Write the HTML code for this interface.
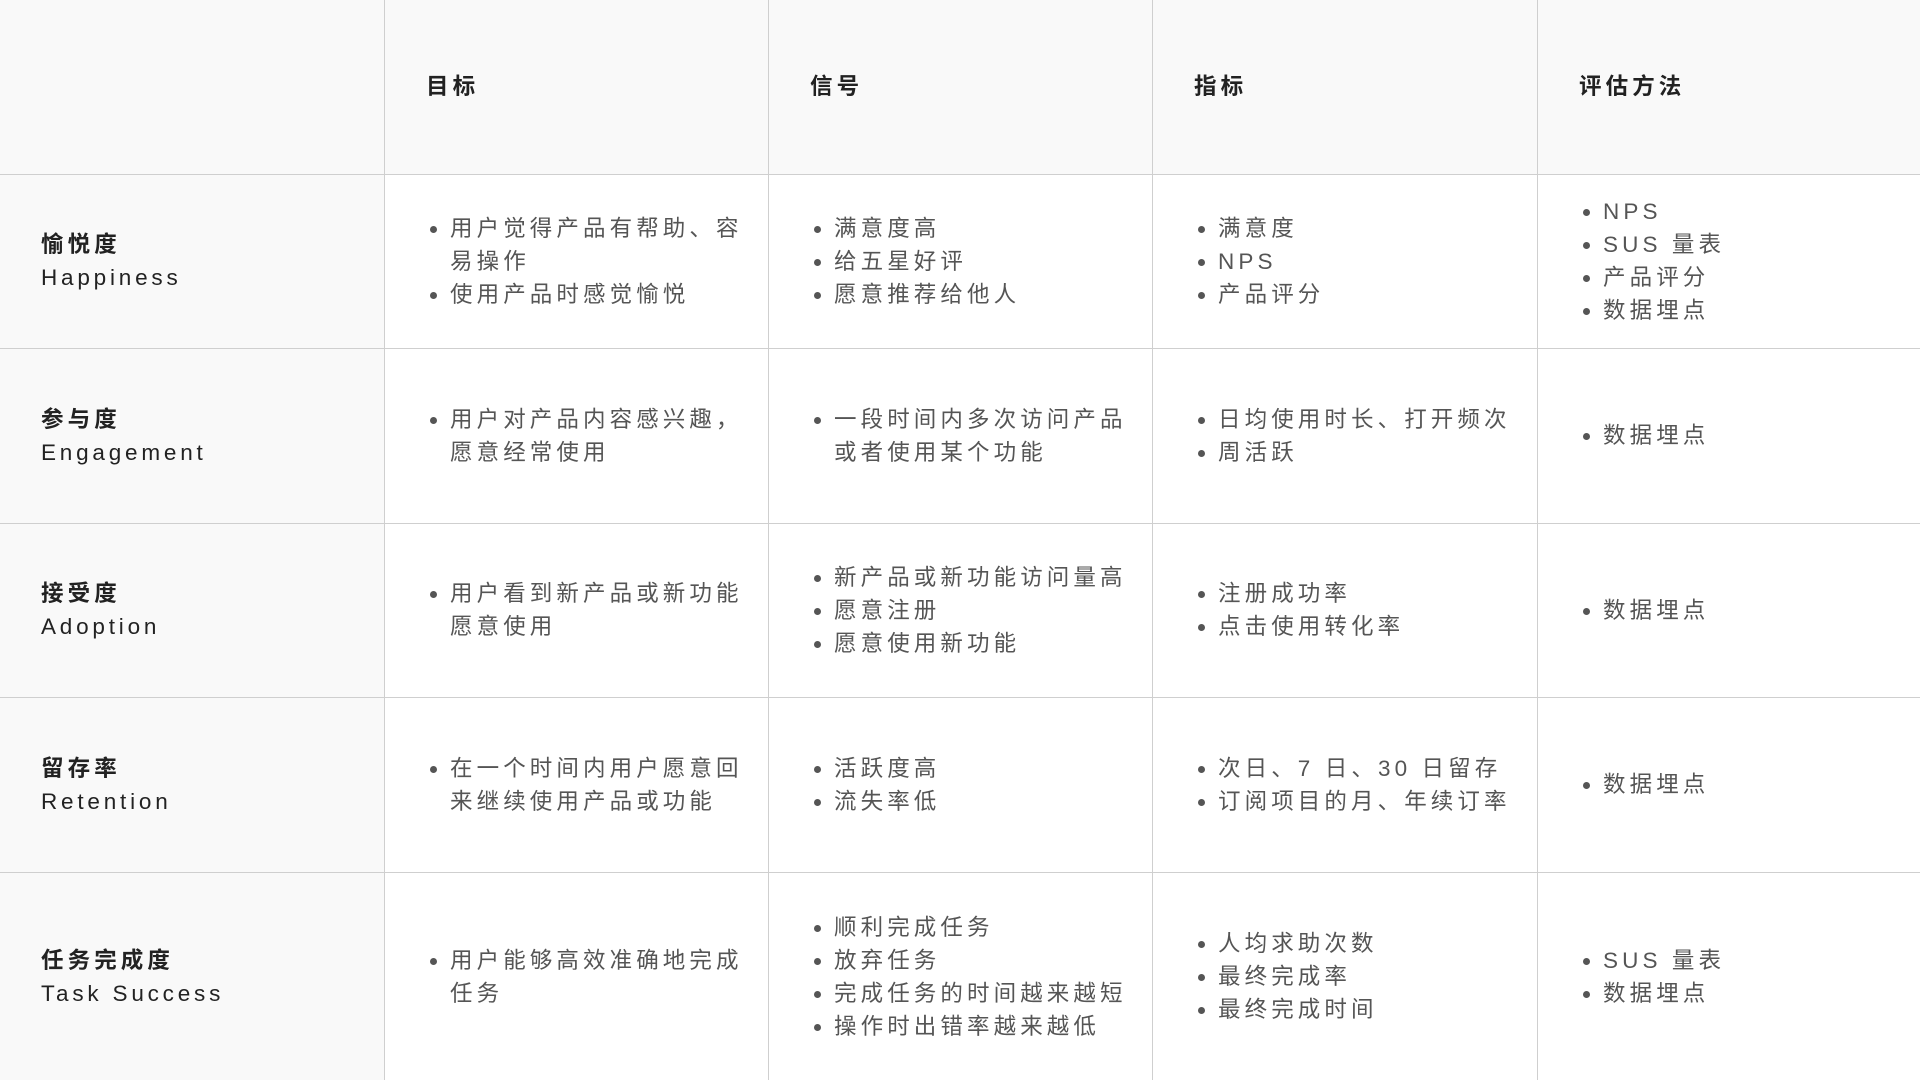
<!DOCTYPE html>
<html><head><meta charset="utf-8"><style>
html,body{margin:0;padding:0;background:#fff;height:1080px;overflow:hidden;}
body{width:1920px;font-family:"Liberation Sans","Noto Sans CJK SC",sans-serif;}
table{border-collapse:collapse;table-layout:fixed;width:1922px;margin-left:-1px;margin-top:-1px;}
td{border:1.5px solid #cfcfcf;vertical-align:middle;padding:0 0 0 41px;font-size:22.5px;letter-spacing:4.1px;color:#555;line-height:33px;}
tr.h td{background:#f9f9f9;height:173.5px;color:#222;font-weight:bold;}
td.f{background:#f9f9f9;color:#222;font-weight:bold;}
td.f span{font-weight:normal;color:#222;letter-spacing:3.8px;}
tr.r td{height:173.5px;}
tr.l td{height:208px;}
ul{list-style:none;margin:0;padding:0 0 0 24px;}
li{position:relative;}
li:before{content:"";position:absolute;left:-20px;top:14px;width:7px;height:7px;border-radius:50%;background:#555;}
</style></head><body>
<table>
<colgroup><col style="width:385px"><col style="width:384px"><col style="width:384px"><col style="width:385px"><col style="width:384px"></colgroup>
<tr class="h"><td></td><td>目标</td><td>信号</td><td>指标</td><td>评估方法</td></tr>
<tr class="r"><td class="f">愉悦度<br><span>Happiness</span></td>
<td><ul><li>用户觉得产品有帮助、容易操作</li><li>使用产品时感觉愉悦</li></ul></td>
<td><ul><li>满意度高</li><li>给五星好评</li><li>愿意推荐给他人</li></ul></td>
<td><ul><li>满意度</li><li>NPS</li><li>产品评分</li></ul></td>
<td><ul><li>NPS</li><li>SUS 量表</li><li>产品评分</li><li>数据埋点</li></ul></td></tr>
<tr class="r"><td class="f">参与度<br><span>Engagement</span></td>
<td><ul><li>用户对产品内容感兴趣，愿意经常使用</li></ul></td>
<td><ul><li>一段时间内多次访问产品或者使用某个功能</li></ul></td>
<td><ul><li>日均使用时长、打开频次</li><li>周活跃</li></ul></td>
<td><ul><li>数据埋点</li></ul></td></tr>
<tr class="r"><td class="f">接受度<br><span>Adoption</span></td>
<td><ul><li>用户看到新产品或新功能愿意使用</li></ul></td>
<td><ul><li>新产品或新功能访问量高</li><li>愿意注册</li><li>愿意使用新功能</li></ul></td>
<td><ul><li>注册成功率</li><li>点击使用转化率</li></ul></td>
<td><ul><li>数据埋点</li></ul></td></tr>
<tr class="r"><td class="f">留存率<br><span>Retention</span></td>
<td><ul><li>在一个时间内用户愿意回来继续使用产品或功能</li></ul></td>
<td><ul><li>活跃度高</li><li>流失率低</li></ul></td>
<td><ul><li>次日、7 日、30 日留存</li><li>订阅项目的月、年续订率</li></ul></td>
<td><ul><li>数据埋点</li></ul></td></tr>
<tr class="l"><td class="f">任务完成度<br><span>Task Success</span></td>
<td><ul><li>用户能够高效准确地完成任务</li></ul></td>
<td><ul><li>顺利完成任务</li><li>放弃任务</li><li>完成任务的时间越来越短</li><li>操作时出错率越来越低</li></ul></td>
<td><ul><li>人均求助次数</li><li>最终完成率</li><li>最终完成时间</li></ul></td>
<td><ul><li>SUS 量表</li><li>数据埋点</li></ul></td></tr>
</table>
</body></html>
